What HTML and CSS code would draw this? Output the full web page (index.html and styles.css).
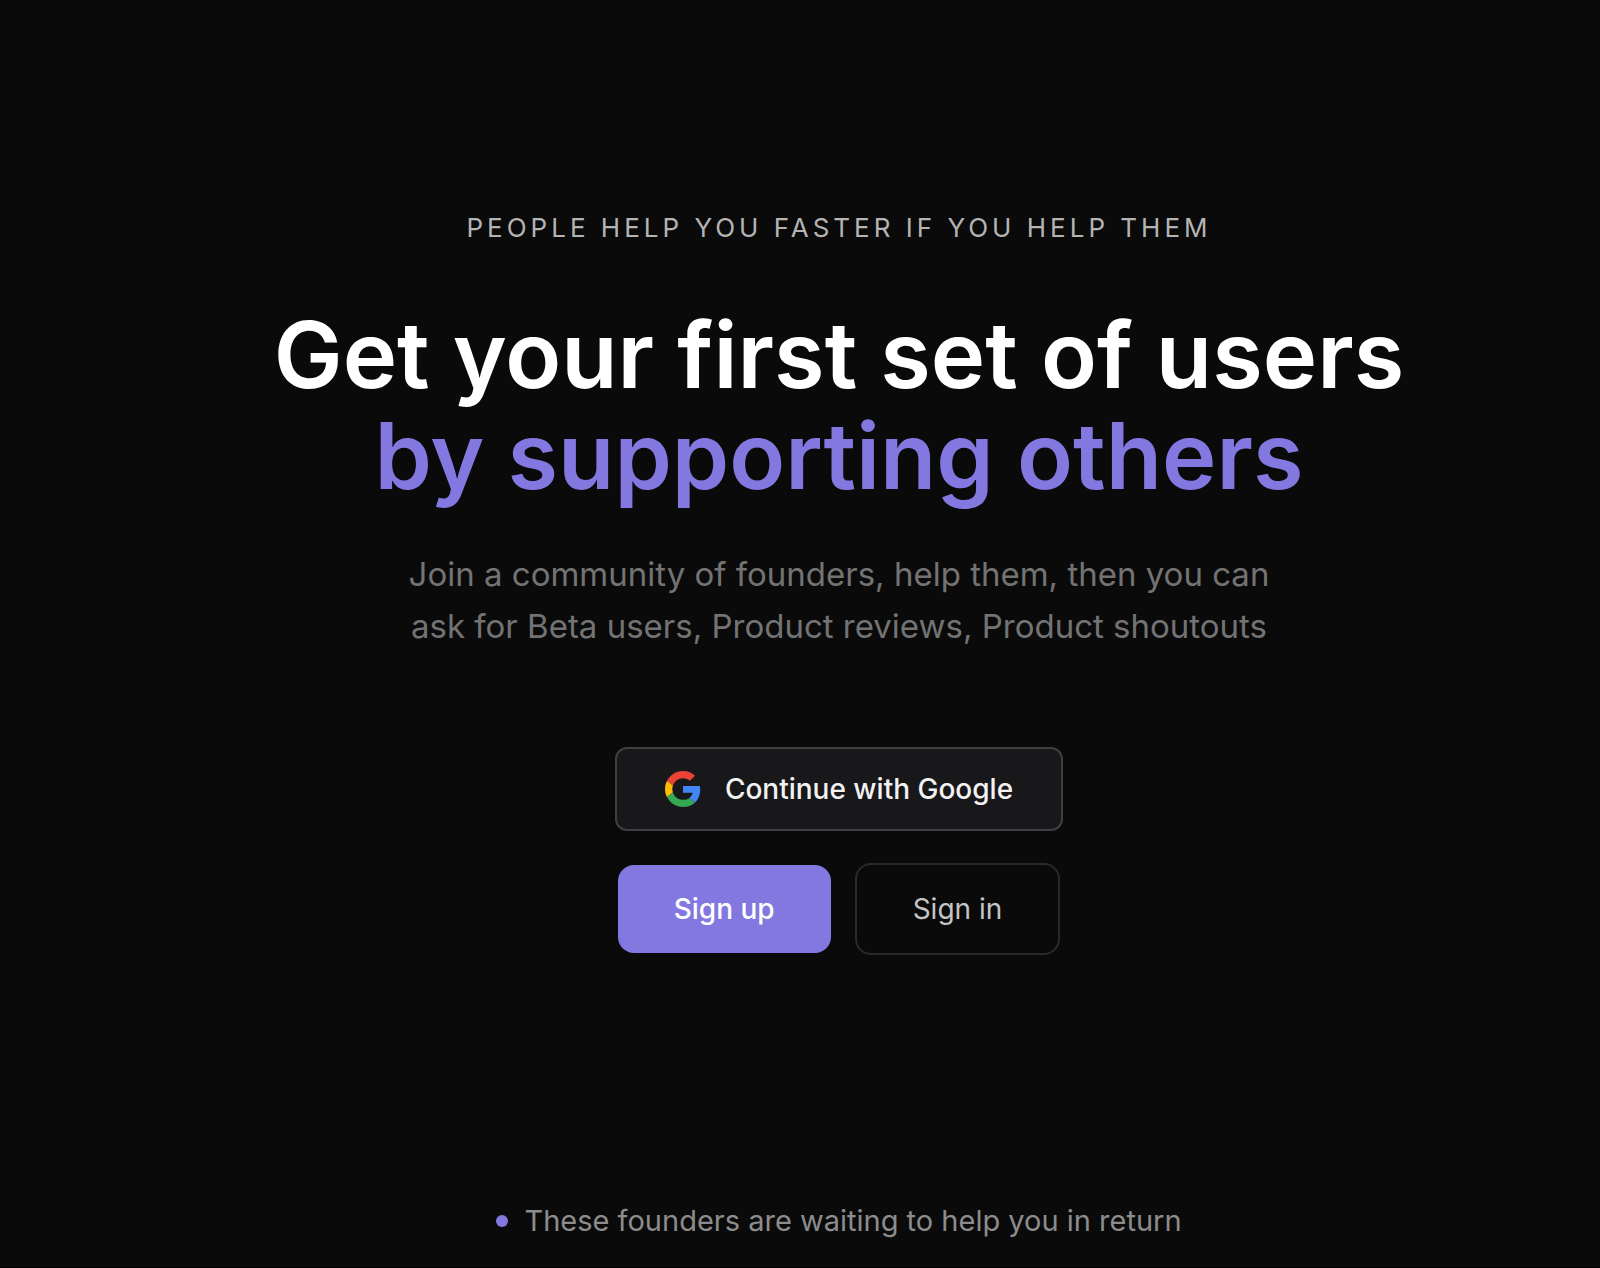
FILE: index.html
```html
<!DOCTYPE html>
<html lang="en">
<head>
    <meta charset="utf-8">
    <meta name="viewport" content="width=device-width, initial-scale=1">
    <title>Get your first set of users</title>
    <link rel="stylesheet" href="styles.css">
</head>
<body>

    <main class="hero">
        <p class="eyebrow">People help you faster if you help them</p>

        <h1 class="title">
            Get your first set of users<br>
            <span class="accent">by supporting others</span>
        </h1>

        <p class="subtitle">
            Join a community of founders, help them, then you can<br>
            ask for Beta users, Product reviews, Product shoutouts
        </p>

        <div class="actions">
            <button type="button" class="btn btn-google">
                <svg class="google-icon" viewBox="0 0 48 48" aria-hidden="true">
                    <path fill="#EA4335" d="M24 9.5c3.54 0 6.71 1.22 9.21 3.6l6.85-6.85C35.9 2.38 30.47 0 24 0 14.62 0 6.51 5.38 2.56 13.22l7.98 6.19C12.43 13.72 17.74 9.5 24 9.5z"/>
                    <path fill="#4285F4" d="M46.98 24.55c0-1.57-.15-3.09-.38-4.55H24v9.02h12.94c-.58 2.96-2.26 5.48-4.78 7.18l7.73 6c4.51-4.18 7.09-10.36 7.09-17.65z"/>
                    <path fill="#FBBC05" d="M10.53 28.59c-.48-1.45-.76-2.99-.76-4.59s.27-3.14.76-4.59l-7.98-6.19C.92 16.46 0 20.12 0 24c0 3.88.92 7.54 2.56 10.78l7.97-6.19z"/>
                    <path fill="#34A853" d="M24 48c6.48 0 11.93-2.13 15.89-5.81l-7.73-6c-2.15 1.45-4.92 2.3-8.16 2.3-6.26 0-11.57-4.22-13.47-9.91l-7.98 6.19C6.51 42.62 14.62 48 24 48z"/>
                </svg>
                Continue with Google
            </button>
            <div class="btn-row">
                <a href="#" class="btn btn-signup">Sign up</a>
                <a href="#" class="btn btn-signin">Sign in</a>
            </div>
        </div>

        <p class="waiting"><span class="dot"></span>These founders are waiting to help you in return</p>
    </main>

</body>
</html>
```
FILE: styles.css
```css
* {
    box-sizing: border-box;
}

body {
    margin: 0;
    background: #0a0a0a;
    color: #fff;
    font-family: "Inter", sans-serif;
}

/* hero */
.hero {
    display: flex;
    flex-direction: column;
    align-items: center;
    min-height: 100vh;
    padding: 208px 0 24px 78px;
    border-bottom: 1px solid #000;
    text-align: center;
}

.eyebrow {
    margin: 0 0 56px;
    color: #b4b4b4;
    font-size: 26px;
    line-height: 40px;
    letter-spacing: 4px;
    text-transform: uppercase;
}

.title {
    margin: 0 0 42px;
    font-size: 92px;
    font-weight: 600;
    line-height: 101px;
}

.accent {
    color: #8378e0;
}

.subtitle {
    margin: 0 0 95px;
    color: #737373;
    font-size: 33px;
    line-height: 52px;
}

/* buttons */
.actions {
    display: flex;
    flex-direction: column;
    align-items: center;
    gap: 32px;
}

.btn-row {
    display: flex;
    align-items: center;
    gap: 24px;
}

.btn {
    display: flex;
    align-items: center;
    justify-content: center;
    border-radius: 16px;
    font-family: inherit;
    font-size: 28px;
    font-weight: 500;
    line-height: 40px;
    text-decoration: none;
    cursor: pointer;
}

.btn-google {
    gap: 24px;
    padding: 20px 48px;
    border: 2px solid #3f3f42;
    border-radius: 12px;
    background: #18181a;
    color: #f2f2f2;
}

.google-icon {
    width: 36px;
    height: 36px;
}

.btn-signup {
    padding: 24px 56px;
    background: #8378e0;
    color: #fff;
}

.btn-signin {
    padding: 24px 56px;
    border: 2px solid #2a2a2a;
    color: #c4c4c4;
    font-weight: 400;
}

/* note under the buttons */
.waiting {
    display: flex;
    align-items: center;
    gap: 16px;
    margin: auto 0 0;
    color: #8c8c8c;
    font-size: 29px;
    line-height: 44px;
}

.dot {
    width: 12px;
    height: 12px;
    border-radius: 50%;
    background: #8378e0;
}
```
